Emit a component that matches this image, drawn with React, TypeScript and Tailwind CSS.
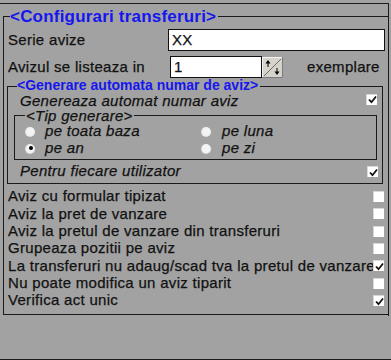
const Check = () => (
  <svg width="9" height="9" viewBox="0 0 9 9" className="block">
    <path d="M1 4.5 L3.5 7.2 L8 1.5" fill="none" stroke="#111" strokeWidth="1.8" />
  </svg>
);

const CheckBox = ({ checked = false }: { checked?: boolean }) => (
  <div className="w-[11px] h-[11px] shrink-0 bg-white border-t border-l border-[#d8d8d8] flex items-center justify-center">
    {checked && <Check />}
  </div>
);

const Radio = ({ selected = false }: { selected?: boolean }) => (
  <div className="w-[10px] h-[10px] shrink-0 rounded-full bg-[#f4f4f4] border-l border-b border-[#dcdcdc] flex items-center justify-center">
    {selected && <div className="w-[4px] h-[4px] rounded-full bg-black" />}
  </div>
);

const Spinner = () => (
  <svg width="21" height="21" viewBox="0 0 21 21" className="block shrink-0">
    <rect x="0" y="0" width="21" height="21" fill="#d6d3cb" />
    <path d="M0 20.5 H20.5 V0" fill="none" stroke="#7a7a7a" />
    <path d="M0.5 20 V0.5 H20" fill="none" stroke="#f4f4f4" />
    <path d="M2 19 L19 2" stroke="#6e6e6e" strokeWidth="1" />
    {/* up arrow */}
    <path d="M6 3 L3.5 6.5 H8.5 Z" fill="#000" />
    <rect x="5.5" y="6" width="1" height="4" fill="#000" />
    {/* down arrow */}
    <rect x="14.5" y="11" width="1" height="4" fill="#000" />
    <path d="M15 18 L12.5 14.5 H17.5 Z" fill="#000" />
  </svg>
);

const rows: { label: string; checked: boolean }[] = [
  { label: 'Aviz cu formular tipizat', checked: false },
  { label: 'Aviz la pret de vanzare', checked: false },
  { label: 'Aviz la pretul de vanzare din transferuri', checked: false },
  { label: 'Grupeaza pozitii pe aviz', checked: false },
  { label: 'La transferuri nu adaug/scad tva la pretul de vanzare', checked: true },
  { label: 'Nu poate modifica un aviz tiparit', checked: false },
  { label: 'Verifica act unic', checked: true },
];

export default function App() {
  return (
    <div className="w-[391px] h-[360px] bg-[#a2a2a2] flex flex-col overflow-hidden text-[#111] font-['Liberation_Sans',Arial,sans-serif] text-[15px] tracking-[0.3px] [-webkit-text-stroke:0.25px_#111]">
      <div className="mt-[3px] w-[389px] h-[313px] border-t border-r border-[#1a1a1a] pt-[12px]">
        {/* Configurari transferuri */}
        <div className="relative ml-[3px] h-[299px] border-l border-t border-b border-[#1a1a1a]">
          <div className="absolute left-[6px] top-[-10px] bg-[#a2a2a2] pr-[2px] text-[17px] leading-[20px] font-bold tracking-[0.2px] text-[#1616ee] [-webkit-text-stroke:0px]">
            &lt;Configurari transferuri&gt;
          </div>

          <div className="flex items-center h-[22px] mt-[12px]">
            <div className="w-[164px] pl-[4px]">Serie avize</div>
            <div className="w-[217px] h-[22px] bg-white border border-[#111] pl-[3px] leading-[20px]">XX</div>
          </div>

          <div className="flex items-center h-[22px] mt-[5px]">
            <div className="w-[166px] pl-[4px]">Avizul se listeaza in</div>
            <div className="w-[92px] h-[22px] bg-white border border-[#111] pl-[3px] leading-[20px]">1</div>
            <Spinner />
            <div className="ml-[24px]">exemplare</div>
          </div>

          {/* Generare automata numar de aviz */}
          <div className="relative mt-[8px] ml-[3px] w-[376px] h-[98px] border border-[#1a1a1a]">
            <div className="absolute left-[9px] top-[-7px] bg-[#a2a2a2] pr-[2px] text-[14px] leading-[11px] font-bold tracking-normal text-[#1616ee] [-webkit-text-stroke:0px]">
              &lt;Generare automata numar de aviz&gt;
            </div>

            <div className="flex items-center justify-between h-[24px] pl-[12px] pr-[5px] italic">
              <span className="leading-[12px] mt-[3px]">Genereaza automat numar aviz</span>
              <CheckBox checked />
            </div>

            {/* Tip generare */}
            <div className="relative mt-[4px] ml-[6px] w-[363px] h-[45px] border border-[#1a1a1a] pt-[7px] italic">
              <div className="absolute left-[10px] top-[-7px] bg-[#a2a2a2] px-[1px] leading-[13px]">
                &lt;Tip generare&gt;
              </div>
              <div className="grid grid-cols-[176px_1fr] pl-[10px]">
                <div className="flex items-center gap-[10px] h-[17px]">
                  <Radio />
                  <span>pe toata baza</span>
                </div>
                <div className="flex items-center gap-[11px] h-[17px]">
                  <Radio />
                  <span>pe luna</span>
                </div>
                <div className="flex items-center gap-[10px] h-[17px]">
                  <Radio selected />
                  <span>pe an</span>
                </div>
                <div className="flex items-center gap-[11px] h-[17px]">
                  <Radio />
                  <span>pe zi</span>
                </div>
              </div>
            </div>

            <div className="flex items-center justify-between h-[23px] pl-[12px] pr-[4px] italic">
              <span>Pentru fiecare utilizator</span>
              <CheckBox checked />
            </div>
          </div>

          <div className="mt-[4px] pl-[4px] pr-[4px]">
            {rows.map((r) => (
              <div key={r.label} className="flex items-center h-[17.33px]">
                <span className="flex-1 min-w-0 whitespace-nowrap">{r.label}</span>
                <CheckBox checked={r.checked} />
              </div>
            ))}
          </div>
        </div>
      </div>
      <div className="flex-1" />
      <div className="h-[1px] bg-[#1a1a1a]" />
    </div>
  );
}
